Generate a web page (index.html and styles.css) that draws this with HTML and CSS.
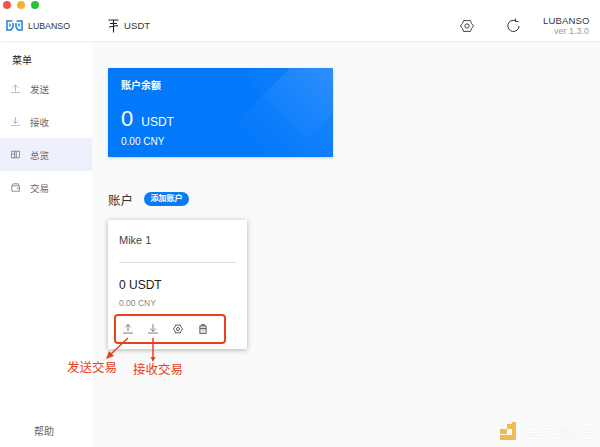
FILE: index.html
```html
<!DOCTYPE html>
<html lang="zh">
<head>
<meta charset="utf-8">
<title>LUBANSO</title>
<link rel="stylesheet" href="styles.css">
</head>
<body>
<div class="app">
  <header class="topbar">
    <div class="lights"><i class="light red"></i><i class="light amber"></i><i class="light green"></i></div>
    <div class="brand">
      <svg class="logo" width="17" height="11" viewBox="0 0 17 11" fill="none" stroke="#1d7fe6" stroke-width="1.5"><path d="M6.500 1H1v9h4l2-3V3M4 3.500v3M10.500 1H16v9h-4l-2-3V3M13 3.500v3"/></svg>
      <span class="brand-name">LUBANSO</span>
    </div>
    <div class="coin">
      <svg width="11" height="14" viewBox="0 0 11 14" fill="none" stroke="#222" stroke-width="1.100"><path d="M.5 1h10M2 4.500h7M1 8l9-1.500M5.500 1v12.500"/></svg>
      <span>USDT</span>
    </div>
    <div class="top-actions">
      <svg width="14" height="14" viewBox="0 0 15 15" fill="none" stroke="#333" stroke-width="1" stroke-linejoin="round"><path d="M14.500 7.500Q11.800 5 11 1.400 7.500 2.500 4 1.400 3.200 5 .5 7.500 3.200 10 4 13.600 7.500 12.500 11 13.600 11.800 10 14.500 7.500z"/><circle cx="7.500" cy="7.500" r="2.300"/></svg>
      <svg class="refresh" width="14" height="15" viewBox="0 0 14 15" fill="none" stroke="#333" stroke-width="1"><path d="M9.500 2.700A5.600 5.600 0 1 0 13 8"/><path d="M9.500 .5v3h3"/></svg>
      <div class="version"><div class="ver-name">LUBANSO</div><div class="ver-num">ver 1.3.0</div></div>
    </div>
  </header>
  <div class="body">
    <aside class="sidebar">
      <div class="menu-title">菜单</div>
      <nav class="menu">
        <div class="item"><svg width="9" height="9" viewBox="0 0 11 11" fill="none" stroke="#aaa"><path d="M5.500 9V1M2 4.500l3.500-3.500 3.500 3.500M0 10.500h11"/></svg><span>发送</span></div>
        <div class="item"><svg width="9" height="9" viewBox="0 0 11 11" fill="none" stroke="#aaa"><path d="M5.500 0v8M2 4.500L5.500 8 9 4.500M0 10.500h11"/></svg><span>接收</span></div>
        <div class="item active"><svg width="9" height="9" viewBox="0 0 11 11" fill="none" stroke="#777"><path d="M.5 1.500h10v8H.5zM4.500 1.500v8M6.500 1.500v8M1.500 5h3"/></svg><span>总览</span></div>
        <div class="item"><svg width="9" height="9" viewBox="0 0 11 11" fill="none" stroke="#777"><path d="M1 3.500h9.500v6.500H1zM1 3.500L2.500 1h6.500v2.500M7 6.500h3.500"/></svg><span>交易</span></div>
      </nav>
      <div class="help">帮助</div>
    </aside>
    <main class="content">
      <section class="balance">
        <i class="shape shape-a"></i><i class="shape shape-b"></i>
        <div class="bal-title">账户余额</div>
        <div class="bal-amount"><span class="bal-num">0</span><span class="bal-unit">USDT</span></div>
        <div class="bal-cny">0.00 CNY</div>
      </section>
      <div class="acct-head"><span class="acct-title">账户</span><span class="add-btn">添加账户</span></div>
      <section class="card">
        <div class="card-name">Mike 1</div>
        <div class="card-rule"></div>
        <div class="card-amt">0 USDT</div>
        <div class="card-cny">0.00 CNY</div>
        <div class="card-icons">
          <svg width="10" height="11" viewBox="0 0 12 13" fill="none" stroke="#666"><path d="M6 10V1.500M2.500 5L6 1.500 9.500 5M0 12h12"/></svg>
          <svg width="10" height="11" viewBox="0 0 12 13" fill="none" stroke="#666"><path d="M6 1v9M2.500 6.500L6 10l3.500-3.500M0 12h12"/></svg>
          <svg width="10" height="10" viewBox="0 0 15 15" fill="none" stroke="#444" stroke-width="1.300" stroke-linejoin="round"><path d="M14.500 7.500Q11.800 5 11 1.400 7.500 2.500 4 1.400 3.200 5 .5 7.500 3.200 10 4 13.600 7.500 12.500 11 13.600 11.800 10 14.500 7.500z"/><circle cx="7.500" cy="7.500" r="2.300"/></svg>
          <svg width="8" height="10" viewBox="0 0 8 11" fill="#ddd" stroke="#555"><path d="M.5 2h7v8.500h-7zM2.500 2V.5h3V2M.5 5h7"/></svg>
        </div>
      </section>
    </main>
  </div>
  <div class="callout-box"></div>
  <svg class="arrows" width="60" height="60" viewBox="0 0 60 60" fill="none" stroke="#e8401c" stroke-width="1.500"><path d="M22 1L4 18"/><path d="M0 22l8-3-5-5z" fill="#e8401c" stroke="none"/><path d="M47 1v20"/><path d="M47 25l-2.500-5h5z" fill="#e8401c" stroke="none"/></svg>
  <div class="note note-send">发送交易</div>
  <div class="note note-recv">接收交易</div>
  <div class="watermark">
    <svg width="16" height="18" viewBox="0 0 16 18" fill="#efbb55"><path d="M0 7h7v5H0zM7 2h5v5H7zM12 0h4v18H0v-5h12z"/></svg>
    <span>金色财经</span>
  </div>
</div>
</body>
</html>
```
FILE: styles.css
```css
* { box-sizing: border-box; }
html, body { margin: 0; padding: 0; }
body {
  font-family: "Liberation Sans", "Noto Sans CJK SC", sans-serif;
  color: #333;
  background: #fff;
}
.app {
  position: relative;
  width: 600px;
  height: 447px;
  overflow: hidden;
  display: flex;
  flex-direction: column;
}
.topbar {
  position: relative;
  flex: 0 0 41px;
  display: flex;
  align-items: center;
  padding: 10px 11px 0 6px;
  background: #fff;
  box-shadow: 0 1px 2px rgba(0,0,0,.08);
  z-index: 2;
}
.lights {
  position: absolute;
  left: 3px;
  top: 1px;
  display: flex;
  gap: 6px;
}
.light { width: 8px; height: 8px; border-radius: 50%; display: block; }
.red { background: #f4544d; }
.amber { background: #f8b02e; }
.green { background: #2ac13f; }
.brand { display: flex; align-items: center; gap: 5px; width: 102px; }
.brand-name { font-size: 8.800px; color: #333; }
.coin { display: flex; align-items: center; gap: 5px; font-size: 9.500px; letter-spacing: .1px; color: #333; }
.top-actions { margin-left: auto; display: flex; align-items: center; }
.refresh { margin-left: 32px; }
.version { margin-left: 23px; width: 46px; text-align: right; line-height: 11px; }
.ver-name { font-size: 9.500px; letter-spacing: .15px; color: #333; }
.ver-num { font-size: 9px; color: #999; }
.body { flex: 1; display: flex; min-height: 0; }
.sidebar {
  width: 92px;
  display: flex;
  flex-direction: column;
  background: #fff;
  box-shadow: 1px 0 2px rgba(0,0,0,.06);
}
.menu-title { padding: 13px 0 0 12px; font-size: 10px; line-height: 13px; color: #222; }
.menu { margin-top: 5px; }
.item {
  height: 33px;
  display: flex;
  align-items: center;
  gap: 10px;
  padding-left: 11px;
  font-size: 9.500px;
  color: #666;
}
.item.active { background: #eef0fb; }
.help { margin-top: auto; padding: 0 0 9px 34px; font-size: 10px; line-height: 13px; color: #666; }
.content { flex: 1; background: #fafafa; padding: 27px 0 0 16px; }
.balance {
  position: relative;
  overflow: hidden;
  width: 225px;
  height: 89px;
  padding: 12px 13px;
  background: #0278fb;
  border-radius: 1px;
  box-shadow: 0 1px 3px rgba(0,0,0,.18);
  color: #fff;
}
.shape { position: absolute; display: block; border-radius: 6px; transform: rotate(45deg); }
.shape-a {
  left: 147px;
  top: -3px;
  width: 130px;
  height: 130px;
  background: linear-gradient(0deg, rgba(255,255,255,0), rgba(255,255,255,.12));
}
.shape-b {
  left: 154px;
  top: -37px;
  width: 90px;
  height: 90px;
  background: linear-gradient(0deg, rgba(255,255,255,.02), rgba(255,255,255,.08));
}
.bal-title { position: relative; font-size: 10px; line-height: 12px; font-weight: bold; }
.bal-amount { position: relative; margin-top: 14px; display: flex; align-items: baseline; gap: 8px; }
.bal-num { font-size: 22px; line-height: 26px; }
.bal-unit { font-size: 12px; }
.bal-cny { position: relative; margin-top: 4px; font-size: 10px; line-height: 12px; }
.acct-head { margin-top: 32px; display: flex; align-items: center; gap: 11px; height: 20px; }
.acct-title { font-size: 12.500px; color: #333; }
.add-btn {
  padding: 0 6.500px;
  height: 14px;
  line-height: 14px;
  border-radius: 7px;
  background: #0a7bf5;
  color: #fff;
  font-size: 8px;
  font-weight: bold;
}
.card {
  margin-top: 11px;
  width: 139px;
  height: 129px;
  padding: 13px 11px 0;
  background: #fff;
  box-shadow: 0 1px 5px rgba(0,0,0,.3);
}
.card-name { font-size: 11px; line-height: 14px; color: #444; }
.card-rule { margin-top: 15px; height: 1px; background: #ddd; }
.card-amt { margin-top: 14px; font-size: 12px; line-height: 16px; color: #222; }
.card-cny { margin-top: 5px; font-size: 8.500px; line-height: 11px; color: #888; }
.card-icons {
  margin: 14px 0 0 -4px;
  display: grid;
  grid-template-columns: repeat(4, 25px);
  justify-items: center;
  align-items: center;
}
.callout-box {
  position: absolute;
  left: 114px;
  top: 314px;
  width: 112px;
  height: 30px;
  border: 2px solid #e8401c;
  border-radius: 4px;
}
.arrows { position: absolute; left: 106px; top: 337px; }
.note { position: absolute; font-size: 12.500px; line-height: 16px; color: #e8401c; }
.note-send { left: 67px; top: 360px; }
.note-recv { left: 133px; top: 362px; }
.watermark {
  position: absolute;
  right: 5px;
  bottom: 4px;
  display: flex;
  align-items: center;
  gap: 9px;
  font-size: 17.500px;
  color: #fff;
  text-shadow: 0 0 1px #ddd;
}
```
